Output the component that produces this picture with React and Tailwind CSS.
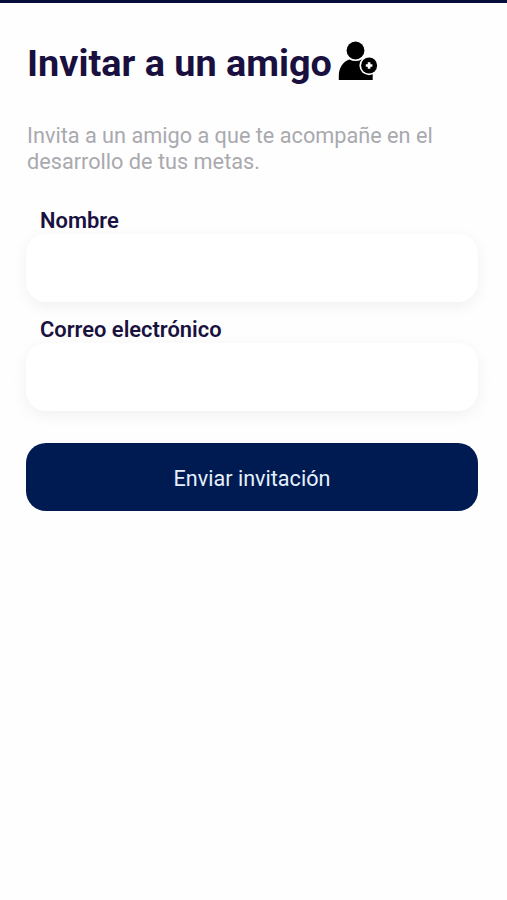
function InviteIcon() {
  return (
    <svg className="h-10 w-10 shrink-0" viewBox="0 0 40 40" aria-hidden="true">
      <path d="M0.800 40V36C0.800 28 5 21.500 11.300 19.500Q17.500 22.500 23.700 19.500L34.700 32V40Z" fill="#000" />
      <circle cx="17.500" cy="10.500" r="8.900" fill="#000" />
      <circle cx="31.100" cy="25.500" r="9.700" fill="#fff" />
      <circle cx="31.100" cy="25.500" r="8" fill="#000" />
      <path d="M31.100 22.200v6.600M27.800 25.500h6.600" stroke="#fff" strokeWidth="2.700" />
    </svg>
  );
}

function Field({ id, label, type = "text" }) {
  return (
    <div className="flex h-[109px] flex-col">
      <label htmlFor={id} className="relative z-10 h-[26px] pt-px pl-[14px] text-[21.900px] leading-[25px] font-[600] text-[#19123f]">
        {label}
      </label>
      <input
        id={id}
        type={type}
        className="mt-px h-[68px] w-full rounded-[20px] bg-white px-4 text-[20px] shadow-[0_4px_16px_rgba(0,0,0,0.060)] outline-none"
      />
    </div>
  );
}

export default function App() {
  return (
    <main className="h-[900px] w-full overflow-hidden border-t-[3px] border-[#060e3c] bg-[#fefefe] font-[Roboto,sans-serif]">
      <div className="pt-[37px] pr-[29px] pl-[26px]">
        <header className="flex h-[45px] items-start">
          <h1 className="mr-[6px] w-[306px] pt-px pl-px text-[37.800px] leading-[45px] font-bold whitespace-nowrap text-[#19103f]">
            Invitar a un amigo
          </h1>
          <InviteIcon />
        </header>
        <p className="mt-[37px] h-[52px] pt-px pl-px text-[21.700px] leading-[26px] text-[#a9a9ae]">
          Invita a un amigo a que te acompañe en el
          <br />
          desarrollo de tus metas.
        </p>
        <form className="mt-[33px]" onSubmit={(e) => e.preventDefault()}>
          <Field id="nombre" label="Nombre" />
          <Field id="correo" label="Correo electrónico" type="email" />
          <button
            type="submit"
            className="mt-[18px] flex h-[68px] w-full items-center justify-center rounded-[20px] bg-[#001b52] pt-[4px] text-[21.600px] text-[#e5f0fc]"
          >
            Enviar invitación
          </button>
        </form>
      </div>
    </main>
  );
}
